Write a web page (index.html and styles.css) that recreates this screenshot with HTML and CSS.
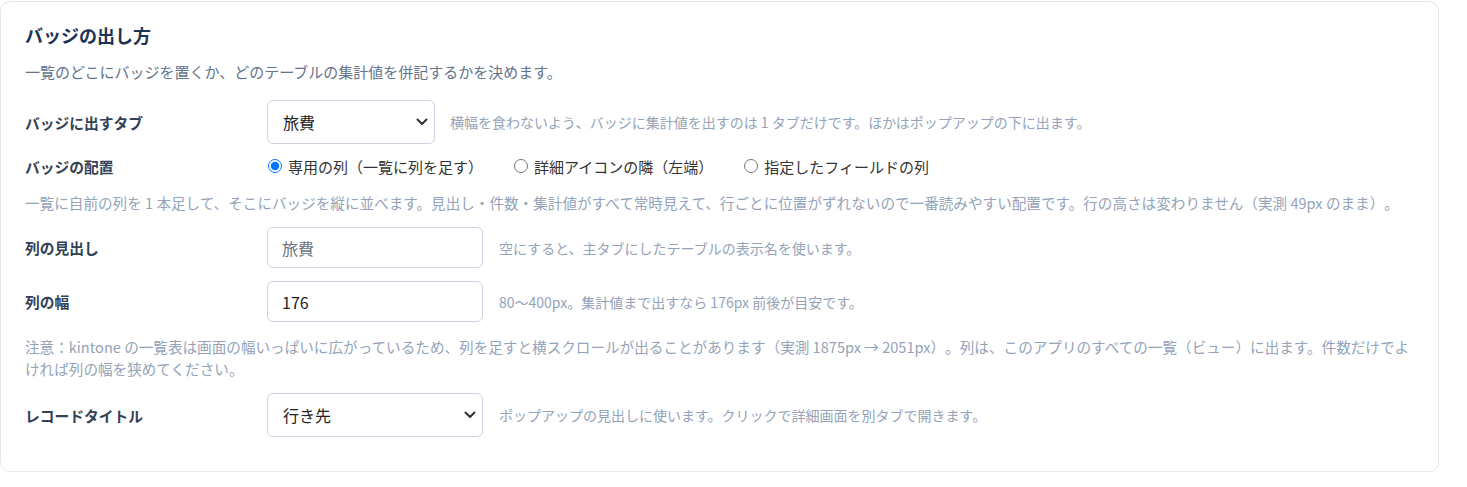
FILE: index.html
```html
<!DOCTYPE html>
<html lang="ja">
<head>
<meta charset="utf-8">
<title>バッジの出し方</title>
<link rel="stylesheet" href="styles.css">
</head>
<body>
<section class="card">
  <h2 class="title">バッジの出し方</h2>
  <p class="desc">一覧のどこにバッジを置くか、どのテーブルの集計値を併記するかを決めます。</p>

  <div class="row row-select">
    <label class="label">バッジに出すタブ</label>
    <div class="select-wrap w-sm">
      <select class="select"><option>旅費</option></select>
      <svg class="chev" width="12" height="8" viewBox="0 0 12 8"><path d="M1.5 1.5 L6 6 L10.5 1.5" fill="none" stroke="#333" stroke-width="2" stroke-linecap="round" stroke-linejoin="round"/></svg>
    </div>
    <span class="help">横幅を食わないよう、バッジに集計値を出すのは 1 タブだけです。ほかはポップアップの下に出ます。</span>
  </div>

  <div class="row row-radio">
    <span class="label">バッジの配置</span>
    <div class="radios">
      <label class="radio"><input type="radio" name="pos" checked><span>専用の列（一覧に列を足す）</span></label>
      <label class="radio"><input type="radio" name="pos"><span>詳細アイコンの隣（左端）</span></label>
      <label class="radio"><input type="radio" name="pos"><span>指定したフィールドの列</span></label>
    </div>
  </div>

  <p class="note note-1">一覧に自前の列を 1 本足して、そこにバッジを縦に並べます。見出し・件数・集計値がすべて常時見えて、行ごとに位置がずれないので一番読みやすい配置です。行の高さは変わりません（実測 49px のまま）。</p>

  <div class="row row-input">
    <label class="label">列の見出し</label>
    <input class="input" type="text" placeholder="旅費">
    <span class="help">空にすると、主タブにしたテーブルの表示名を使います。</span>
  </div>

  <div class="row row-input row-gap">
    <label class="label">列の幅</label>
    <input class="input" type="text" value="176">
    <span class="help">80〜400px。集計値まで出すなら 176px 前後が目安です。</span>
  </div>

  <p class="note note-2">注意：kintone の一覧表は画面の幅いっぱいに広がっているため、列を足すと横スクロールが出ることがあります（実測 1875px → 2051px）。列は、このアプリのすべての一覧（ビュー）に出ます。件数だけでよければ列の幅を狭めてください。</p>

  <div class="row row-select">
    <label class="label">レコードタイトル</label>
    <div class="select-wrap w-md">
      <select class="select"><option>行き先</option></select>
      <svg class="chev" width="12" height="8" viewBox="0 0 12 8"><path d="M1.5 1.5 L6 6 L10.5 1.5" fill="none" stroke="#333" stroke-width="2" stroke-linecap="round" stroke-linejoin="round"/></svg>
    </div>
    <span class="help">ポップアップの見出しに使います。クリックで詳細画面を別タブで開きます。</span>
  </div>
</section>
</body>
</html>
```

FILE: styles.css
```css
* { box-sizing: border-box; }

html, body {
  margin: 0;
  padding: 0;
  background: #ffffff;
}

body {
  padding-top: 1px;
  font-family: "Noto Sans CJK JP", "Noto Sans", "Liberation Sans", sans-serif;
  color: #333;
  text-spacing-trim: space-all;
}

.card {
  width: 1439px;
  height: 471px;
  border: 1px solid #e2e8f0;
  border-radius: 10px;
  padding: 20px 24px 32px 24px;
  background: #fff;
}

.title {
  margin: 0;
  font-size: 18px;
  line-height: 26px;
  font-weight: 700;
  color: #1e3355;
}

.desc {
  margin: 13px 0 0 0;
  font-size: 15px;
  line-height: 22px;
  color: #64748b;
}

.row {
  display: flex;
  align-items: center;
}

.label {
  width: 242px;
  flex: none;
  font-size: 14.75px;
  font-weight: 700;
  color: #334155;
}

.row-select {
  margin-top: 17px;
  height: 44px;
}

.row-radio {
  margin-top: 12px;
  height: 20px;
}

.row-input {
  margin-top: 13px;
  height: 41px;
}

.row-gap {
  margin-top: 13px;
}

.note + .row-select {
  margin-top: 13px;
}

.select-wrap {
  position: relative;
  height: 44px;
  flex: none;
}

.w-sm { width: 168px; }
.w-md { width: 216px; }

.select {
  appearance: none;
  -webkit-appearance: none;
  width: 100%;
  height: 100%;
  border: 1px solid #cbd5e1;
  border-radius: 6px;
  background: #fff;
  padding: 0 36px 0 15px;
  font-family: inherit;
  font-size: 16px;
  color: #222;
}

.chev {
  position: absolute;
  right: 7px;
  top: 18px;
  pointer-events: none;
}

.input {
  width: 216px;
  height: 41px;
  flex: none;
  border: 1px solid #cbd5e1;
  border-radius: 6px;
  padding: 0 14px;
  font-family: inherit;
  font-size: 16px;
  color: #222;
  background: #fff;
}

.input::placeholder {
  color: #6b7280;
}

.help {
  margin-left: 16px;
  font-size: 14px;
  color: #94a3b8;
  white-space: nowrap;
}

.row-select .w-sm + .help {
  margin-left: 15px;
}

.radios {
  display: flex;
  align-items: center;
  gap: 30px;
}

.radio {
  display: flex;
  align-items: center;
  font-size: 15px;
  color: #333;
}

.radio input {
  margin: 0 6px 0 1px;
  width: 14px;
  height: 14px;
}

.note {
  margin: 0;
  font-size: 14.6px;
  line-height: 22px;
  color: #94a3b8;
}

.note-1 {
  margin-top: 16px;
}

.note-2 {
  margin-top: 14px;
}
```
